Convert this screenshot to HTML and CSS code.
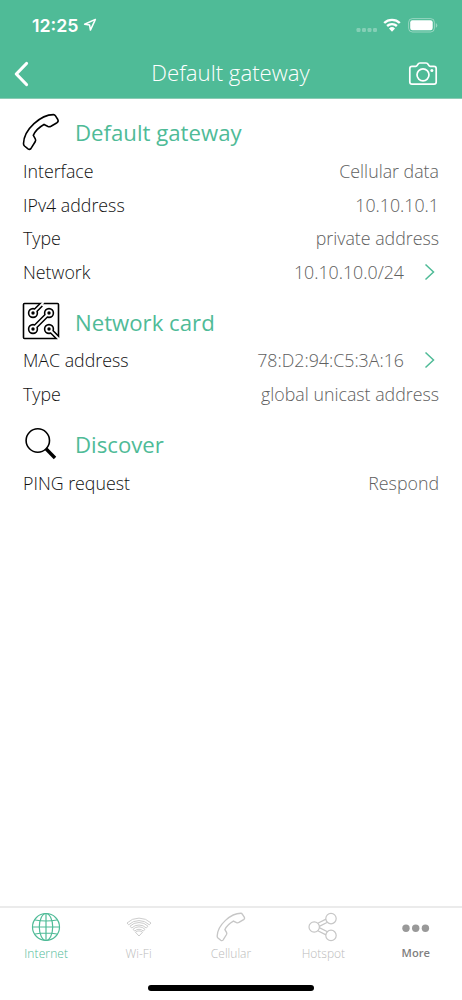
FILE: index.html
```html
<!DOCTYPE html>
<html lang="en">
<head>
    <meta charset="UTF-8">
    <meta name="viewport" content="width=device-width, initial-scale=1.0">
    <title>Default gateway</title>
    <link rel="stylesheet" href="styles.css">
</head>
<body>

    <header class="header">
        <div class="status-bar">
            <span class="time">12:25</span>
            <svg class="location" width="14" height="14" viewBox="0 0 14 14"><path d="M12.4 1.4 1.6 6.2l5 .9.8 5z"/></svg>
            <div class="status-icons">
                <svg width="22" height="6" viewBox="0 0 22 6" fill="#fff" opacity="0.3"><rect x="0.5" y="1" width="4" height="4" rx="1.2"/><rect x="6" y="1" width="4" height="4" rx="1.2"/><rect x="11.5" y="1" width="4" height="4" rx="1.2"/><rect x="17" y="1" width="4" height="4" rx="1.2"/></svg>
                <svg class="signal" width="18" height="14" viewBox="0 0 18 14"><path d="M1.2 5a11.3 11.3 0 0 1 15.6 0M4.1 8a7.2 7.2 0 0 1 9.8 0" fill="none" stroke="#fff" stroke-width="2.4"/><path d="M6 10.5a4.4 4.4 0 0 1 6 0L9 13.7z" fill="#fff"/></svg>
                <svg class="battery" width="30" height="15" viewBox="0 0 30 15"><rect x="0.6" y="0.6" width="25.8" height="13.4" rx="3.8" fill="none" stroke="#fff" stroke-opacity="0.4"/><rect x="2.2" y="2.3" width="22.5" height="10" rx="2.2" fill="#fff"/><path d="M27.8 5v4.8q1.5-.7 1.5-2.4T27.8 5" fill="#fff" fill-opacity="0.4"/></svg>
            </div>
        </div>
        <div class="nav-bar">
            <svg width="16" height="26" viewBox="0 0 16 26"><path d="M13.5 2.5 3.3 13l10.2 10.5" fill="none" stroke="#fff" stroke-width="3.2" stroke-linecap="round" stroke-linejoin="round"/></svg>
            <h1>Default gateway</h1>
            <svg class="camera" width="30" height="24" viewBox="0 0 30 24"><path d="M4 4.3h3.7q1 0 1.5-.9l.7-1.1Q10.5 1 12 1h6q1.5 0 2.1 1.3l.7 1.1q.5.9 1.5.9H26q2.2 0 2.2 2.2V20q0 2.100-2.200 2.100H4q-2.200 0-2.200-2.100V6.500Q1.800 4.300 4 4.300z"/><circle cx="15" cy="12.800" r="6"/><circle class="dot" cx="23.900" cy="8.400" r="1.500"/></svg>
        </div>
    </header>

    <main class="content">
        <section>
            <div class="section-title">
                <svg width="38" height="38" viewBox="0 0 38 38"><path class="line" d="M31.5 1.600C19 1.600 2 16 1.500 30.500Q1.400 32 2.500 33L6 35.800Q7.600 36.900 8.900 35.600L13.300 28.500Q14 27 13.300 25.800L11.300 22.300C13 18.500 17.500 14 22 11.500L26 13.500Q27.500 14 29 13.200L35 9.700Q36.800 8.500 35.800 6.500L33.500 2.900Q32.700 1.600 31.500 1.600z"/></svg>
                <h2>Default gateway</h2>
            </div>
            <div class="row"><span>Interface</span><span class="value">Cellular data</span></div>
            <div class="row"><span>IPv4 address</span><span class="value">10.10.10.1</span></div>
            <div class="row"><span>Type</span><span class="value">private address</span></div>
            <div class="row"><span>Network</span><span class="value">10.10.10.0/24</span><svg class="chevron" width="12" height="18" viewBox="0 0 12 18"><path d="M1.5 1.5 9.500 9l-8 7.500"/></svg></div>
        </section>

        <section>
            <div class="section-title">
                <svg width="38" height="38" viewBox="0 0 38 38">
                    <rect class="line" x="1.5" y="1.500" width="35" height="35" rx="1"/>
                    <g class="track-outer">
                        <path d="M11 11 19.200 2.800M11 27 27 11M27 27l8.300 8.300"/>
                        <circle cx="11" cy="11" r="5.200"/><circle cx="27" cy="11" r="5.200"/><circle cx="11" cy="27" r="5.200"/><circle cx="27" cy="27" r="5.200"/>
                    </g>
                    <g class="track-inner">
                        <path d="M11 11 21.800.2M11 27 27 11M27 27l11 11"/>
                        <circle cx="11" cy="11" r="3.600"/><circle cx="27" cy="11" r="3.600"/><circle cx="11" cy="27" r="3.600"/><circle cx="27" cy="27" r="3.600"/>
                    </g>
                    <circle cx="11" cy="11" r="1.700"/><circle cx="27" cy="11" r="1.700"/><circle cx="11" cy="27" r="1.700"/><circle cx="27" cy="27" r="1.700"/>
                </svg>
                <h2>Network card</h2>
            </div>
            <div class="row"><span>MAC address</span><span class="value">78:D2:94:C5:3A:16</span><svg class="chevron" width="12" height="18" viewBox="0 0 12 18"><path d="M1.500 1.500 9.500 9l-8 7.500"/></svg></div>
            <div class="row"><span>Type</span><span class="value">global unicast address</span></div>
        </section>

        <section>
            <div class="section-title">
                <svg width="38" height="38" viewBox="0 0 38 38"><circle class="line" cx="15.800" cy="15.500" r="11.700"/><path d="m24 23.800 9 9.200" stroke="#000" stroke-width="3.400"/></svg>
                <h2>Discover</h2>
            </div>
            <div class="row"><span>PING request</span><span class="value">Respond</span></div>
        </section>
    </main>

    <footer class="tab-bar">
        <nav class="tabs">
            <div class="tab active">
                <svg width="30" height="30" viewBox="0 0 30 30"><circle cx="15" cy="15" r="13.500"/><ellipse cx="15" cy="15" rx="6.700" ry="13.500"/><path d="M15 1.500v27M1.500 15h27M4 8q11 2 22 0M4 22q11-2 22 0"/></svg>
                <span>Internet</span>
            </div>
            <div class="tab">
                <svg width="30" height="30" viewBox="0 0 30 30"><path class="thin" d="M3 11a17.200 17.200 0 0 1 24 0l-1.700 1.800a14.700 14.700 0 0 0-20.600 0zM6 14.200a12.800 12.800 0 0 1 18 0l-1.700 1.800a10.400 10.400 0 0 0-14.600 0zM9 17.300a8.500 8.500 0 0 1 12 0l-1.700 1.800a6 6 0 0 0-8.600 0zM11.500 20.300a5 5 0 0 1 7 0L15 24z"/></svg>
                <span>Wi-Fi</span>
            </div>
            <div class="tab">
                <svg width="30" height="30" viewBox="0 0 38 38"><path class="phone" d="M31.500 1.600C19 1.600 2 16 1.500 30.500Q1.400 32 2.500 33L6 35.800Q7.600 36.900 8.900 35.600L13.300 28.500Q14 27 13.300 25.800L11.300 22.300C13 18.500 17.500 14 22 11.500L26 13.500Q27.500 14 29 13.200L35 9.700Q36.800 8.500 35.800 6.500L33.500 2.900Q32.700 1.600 31.500 1.600z"/></svg>
                <span>Cellular</span>
            </div>
            <div class="tab">
                <svg width="30" height="30" viewBox="0 0 30 30"><circle cx="6.200" cy="15" r="5.200"/><circle cx="23" cy="6.600" r="5.200"/><circle cx="23" cy="23.400" r="5.200"/><path d="m9.800 11.300 8.200-4.200M11.300 14.400l8.200-4.200M11.300 15.600l8.200 4.200M9.800 18.700l8.200 4.200"/></svg>
                <span>Hotspot</span>
            </div>
            <div class="tab more">
                <svg width="30" height="30" viewBox="0 0 30 30"><circle cx="5" cy="16.300" r="3.700"/><circle cx="14.700" cy="16.300" r="3.700"/><circle cx="24.400" cy="16.300" r="3.700"/></svg>
                <span>More</span>
            </div>
        </nav>
        <div class="home-indicator"></div>
    </footer>

</body>
</html>
```
FILE: styles.css
```css
* {
    box-sizing: border-box;
}

body {
    font-family: "Open Sans", sans-serif;
    font-weight: 300;
    background-color: #fff;
    color: #000;
    margin: 0;
    height: 1000px;
    display: flex;
    flex-direction: column;
    overflow: hidden;
}

svg {
    display: block;
    flex-shrink: 0;
}

.header {
    height: 99px;
    background-color: #4fbb97;
    border-bottom: 1px solid #8bcbb4;
    color: #fff;
}

.status-bar {
    height: 50px;
    padding: 0 24px 0 32px;
    display: flex;
    align-items: center;
}

.time {
    font-family: Inter, sans-serif;
    font-size: 17.8px;
    font-weight: 600;
}

.location {
    margin-left: 4px;
    fill: none;
    stroke: #fff;
    stroke-width: 1.5;
    stroke-linejoin: round;
}

.status-icons {
    margin-left: auto;
    display: flex;
    align-items: center;
}

.status-icons svg:first-child {
    margin-top: 9px;
}

.signal {
    margin-left: 5px;
}

.battery {
    margin-left: 7px;
}

.nav-bar {
    height: 48px;
    padding: 0 24px 0 13px;
    display: flex;
    align-items: center;
    justify-content: space-between;
}

h1 {
    margin: 0 0 3px 24px;
    font-size: 22.2px;
    font-weight: 300;
}

.camera {
    fill: none;
    stroke: #fff;
    stroke-width: 1.7;
}

.camera .dot {
    fill: #fff;
    stroke: none;
}

.content {
    flex: 1;
    padding: 10.2px 23px 0 22px;
}

section {
    margin-bottom: 9.6px;
}

.section-title {
    height: 45.5px;
    display: flex;
    align-items: center;
    gap: 15px;
}

.line {
    fill: none;
    stroke: #000;
    stroke-width: 1.6;
}

.track-outer {
    fill: #000;
    stroke: #000;
    stroke-width: 4.8;
}

.track-inner {
    fill: #fff;
    stroke: #fff;
    stroke-width: 1.8;
}

.track-outer circle,
.track-inner circle {
    stroke: none;
}

h2 {
    margin: 2px 0 0;
    font-size: 22.2px;
    font-weight: 400;
    color: #4fbb97;
}

.row {
    height: 33.6px;
    padding: 0 0 1px 1px;
    display: flex;
    align-items: center;
    font-size: 17.8px;
    color: #111;
}

.value {
    margin-left: auto;
    color: #606060;
}

.chevron {
    margin-left: 20px;
    margin-right: 3px;
    fill: none;
    stroke: #4fbb97;
    stroke-width: 1.5;
}

.tab-bar {
    height: 94px;
    border-top: 2px solid #ebebeb;
}

.tabs {
    height: 77px;
    display: grid;
    grid-template-columns: repeat(5, 1fr);
}

.tab {
    display: flex;
    flex-direction: column;
    align-items: center;
    padding-top: 4px;
    font-size: 12px;
    color: #bbb;
}

.tab svg {
    fill: none;
    stroke: #c6c6c6;
    stroke-width: 1.2;
}

.tab .thin {
    stroke-width: 0.9;
}

.tab .phone {
    stroke-width: 1.7;
}

.tab span {
    margin-top: 3px;
}

.tab.active {
    color: #4fbb97;
    letter-spacing: 0.1px;
}

.tab.active svg {
    stroke: #4fbb97;
}

.tab.more {
    color: #808080;
    font-size: 11.2px;
    font-weight: 600;
}

.tab.more svg {
    fill: #999;
    stroke: none;
}

.home-indicator {
    width: 166px;
    height: 6px;
    margin: 0 auto;
    border-radius: 3px;
    background-color: #000;
}
```
